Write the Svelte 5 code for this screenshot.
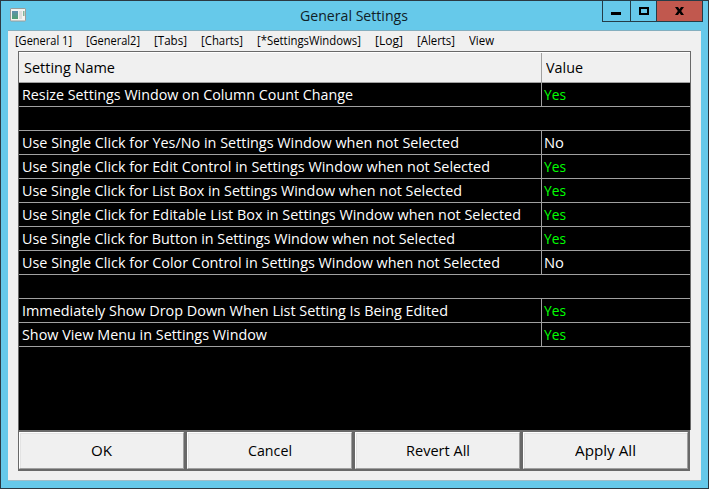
<script>
  const menus = [
    ['[General 1]', 57, 14], ['[General2]', 54, 14], ['[Tabs]', 33, 14], ['[Charts]', 42, 14],
    ['[*SettingsWindows]', 104, 14], ['[Log]', 28, 14], ['[Alerts]', 38, 14], ['View', 25, 0]
  ];
  const rows = [
    { name: 'Resize Settings Window on Column Count Change', w: 331, value: 'Yes' },
    null,
    { name: 'Use Single Click for Yes/No in Settings Window when not Selected', w: 437, value: 'No' },
    { name: 'Use Single Click for Edit Control in Settings Window when not Selected', w: 468, value: 'Yes' },
    { name: 'Use Single Click for List Box in Settings Window when not Selected', w: 440, value: 'Yes' },
    { name: 'Use Single Click for Editable List Box in Settings Window when not Selected', w: 499, value: 'Yes' },
    { name: 'Use Single Click for Button in Settings Window when not Selected', w: 433, value: 'Yes' },
    { name: 'Use Single Click for Color Control in Settings Window when not Selected', w: 478, value: 'No' },
    null,
    { name: 'Immediately Show Drop Down When List Setting Is Being Edited', w: 426, value: 'Yes' },
    { name: 'Show View Menu in Settings Window', w: 245, value: 'Yes' }
  ];
  const buttons = [['OK', 21], ['Cancel', 44], ['Revert All', 64], ['Apply All', 61]];

  // Condenses a label horizontally to the given width.
  function fit(node, width) {
    const natural = node.getBoundingClientRect().width;
    node.style.transform = `scaleX(${width / natural})`;
    node.style.marginRight = `${width - natural}px`;
  }
</script>

<div class="window">
  <header class="titlebar">
    <svg class="app-icon" width="16" height="14" viewBox="0 0 16 14">
      <defs>
        <linearGradient id="pane" x1="0" y1="0" x2="0" y2="1">
          <stop offset="0" stop-color="#5f8fb0" /><stop offset="1" stop-color="#4da070" />
        </linearGradient>
      </defs>
      <rect x=".5" y=".5" width="15" height="12.5" rx=".6" fill="#f3f3f1" stroke="#9a9c98" />
      <rect x="2" y="3" width="6" height="8" fill="url(#pane)" />
      <rect x="9" y="3" width="3" height="8" fill="#dededc" />
      <rect x="13" y="3" width="1.5" height="5" fill="#84b49c" />
    </svg>
    <h1><span class="fit" use:fit={108}>General Settings</span></h1>
    <div class="controls">
      <div class="ctl min"><svg width="27" height="21" shape-rendering="crispEdges"><rect x="8" y="12" width="10" height="3" /></svg></div>
      <div class="ctl max"><svg width="25" height="21" shape-rendering="crispEdges"><path d="M8 7h10v8H8zM10 9v4h6V9z" fill-rule="evenodd" /></svg></div>
      <div class="ctl close"><svg width="45" height="21"><path d="M18 7h3l1.5 2.2L24 7h3l-2.8 4 2.8 4h-3l-1.5-2.2L21 15h-3l2.8-4z" /></svg></div>
    </div>
  </header>
  <main>
    <nav>
      {#each menus as [label, w, gap]}
        <div class="menu" style:margin-right="{gap}px"><span class="fit" use:fit={w}>{label}</span></div>
      {/each}
    </nav>
    <section class="grid">
      <div class="head">
        <div class="name"><span class="fit" use:fit={91}>Setting Name</span></div>
        <div class="value"><span class="fit" use:fit={37}>Value</span></div>
      </div>
      {#each rows as row}
        <div class="row">
          {#if row}
            <div class="name"><span class="fit" use:fit={row.w}>{row.name}</span></div>
            <div class="value" class:yes={row.value === 'Yes'}><span class="fit" use:fit={row.value === 'Yes' ? 22 : 20}>{row.value}</span></div>
          {/if}
        </div>
      {/each}
    </section>
    <footer>
      {#each buttons as [label, w]}
        <button><span class="fit" use:fit={w}>{label}</span></button>
      {/each}
    </footer>
  </main>
</div>

<style>
  :global(body) { overflow: hidden; }
  .window {
    box-sizing: border-box;
    width: 709px;
    height: 489px;
    border: 1px solid #2b3942;
    padding: 0 7px 7px;
    background: #66c9ea;
    color: #000;
    font: 15px/20px "Open Sans", "Noto Sans", sans-serif;
  }
  .fit { display: inline-block; white-space: pre; transform-origin: 0 50%; }
  .titlebar { height: 29px; display: flex; margin-right: -2px; }
  .app-icon { margin: 7px 0 0 2px; }
  h1 { margin: 4px 0 0 274px; font: inherit; width: 108px; white-space: nowrap; color: #102027; }
  .controls {
    display: flex;
    margin: -1px 0 0 auto;
    height: 20px;
    border: 1px solid #243c47;
    align-self: flex-start;
  }
  .ctl { height: 20px; border-right: 1px solid #243c47; }
  .ctl svg { display: block; margin-top: -1px; }
  .min { width: 27px; }
  .max { width: 25px; }
  .close { width: 45px; border: 0; background: #c1584e; }
  main {
    height: 451px;
    box-sizing: border-box;
    background: #f0f0f0;
    border-top: 1px solid #84aebe;
    border-bottom: 1px solid #a0bdc9;
    padding: 0 10px;
  }
  nav { display: flex; height: 20px; margin-left: -3px; font-size: 12px; line-height: 20px; }
  .grid { box-sizing: border-box; width: 673px; height: 379px; border: 1px solid #696969; border-bottom: 0; background: #000; }
  .head { display: flex; height: 29px; border-top: 1px solid #fff; border-bottom: 1px solid #a0a0a0; background: #f0f0f0; line-height: 28px; }
  .head .name { padding-left: 5px; }
  .head .value { padding-left: 4px; }
  .name { box-sizing: border-box; width: 522px; padding-left: 3px; white-space: nowrap; }
  .value { flex: 1; border-left: 1px solid #a0a0a0; padding-left: 2px; }
  .row { display: flex; height: 23px; border-bottom: 1px solid #a0a0a0; color: #fff; line-height: 23px; }
  .yes { color: #00ff00; }
  footer { display: flex; width: 672px; height: 41px; box-sizing: border-box; background: #696969; border-top: 2px solid #696969; padding: 0 0 2px 1px; gap: 3px; }
  button {
    appearance: none;
    box-sizing: border-box;
    width: 165px;
    padding: 0;
    border: 1px solid;
    border-color: #fff #a0a0a0 #a0a0a0 #fff;
    border-radius: 0;
    background: #f0f0f0;
    box-shadow: inset 1px 1px #e3e3e3;
    color: #000;
    font: inherit;
    line-height: 35px;
    text-align: center;
  }
</style>
